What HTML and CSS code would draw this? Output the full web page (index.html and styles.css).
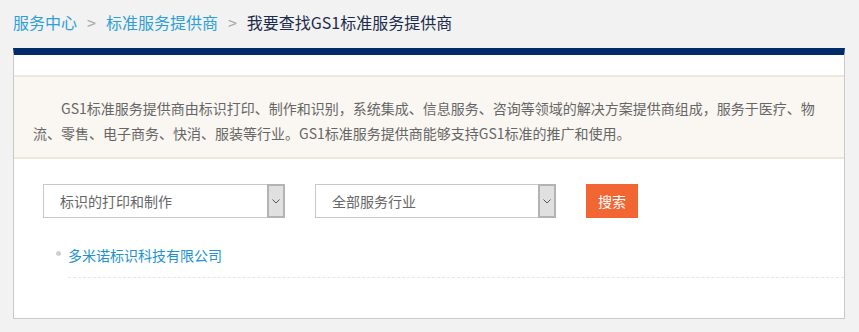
FILE: index.html
```html
<!DOCTYPE html>
<html lang="zh-CN">
<head>
<meta charset="utf-8">
<title>我要查找GS1标准服务提供商</title>
<link rel="stylesheet" href="styles.css">
</head>
<body>
<nav class="crumbs">
  <a class="crumb-link" href="#">服务中心</a><span class="sep">&gt;</span><a class="crumb-link" href="#">标准服务提供商</a><span class="sep">&gt;</span><span class="crumb-current">我要查找GS1标准服务提供商</span>
</nav>
<main class="box">
  <div class="intro">
    <p class="intro-text">GS1标准服务提供商由标识打印、制作和识别，系统集成、信息服务、咨询等领域的解决方案提供商组成，服务于医疗、物流、零售、电子商务、快消、服装等行业。GS1标准服务提供商能够支持GS1标准的推广和使用。</p>
  </div>
  <form class="filters">
    <div class="select select-wide">
      <span class="select-value">标识的打印和制作</span>
      <span class="select-arrow"><svg width="8" height="5" viewBox="0 0 8 5"><path d="M0.5 0.5 L4 4 L7.5 0.5" fill="none" stroke="#555" stroke-width="1"/></svg></span>
    </div>
    <div class="select select-narrow">
      <span class="select-value">全部服务行业</span>
      <span class="select-arrow"><svg width="8" height="5" viewBox="0 0 8 5"><path d="M0.5 0.5 L4 4 L7.5 0.5" fill="none" stroke="#555" stroke-width="1"/></svg></span>
    </div>
    <button class="search-btn" type="button">搜索</button>
  </form>
  <ul class="results">
    <li class="result"><span class="dot"></span><a class="result-name" href="#">多米诺标识科技有限公司</a></li>
  </ul>
</main>
</body>
</html>
```
FILE: styles.css
```css
* { box-sizing: border-box; }
body {
  margin: 0;
  background: #f2f2f2;
  font-family: "Microsoft YaHei", "Noto Sans CJK SC", "Noto Sans", sans-serif;
  color: #666;
}
a { text-decoration: none; }

.crumbs {
  height: 48px;
  padding: 12px 13px 0;
  font-size: 16px;
  line-height: 20px;
  white-space: nowrap;
}
.crumb-link { color: #2e9fd6; }
.sep { color: #aaa; margin: 0 10px; }
.crumb-current { color: #1d2b4a; }

.box {
  margin: 0 14px 0 13px;
  background: #fff;
  border: 1px solid #c9c9c9;
  border-top: 7px solid #022b69;
  padding-top: 20px;
}

.intro {
  background: #faf7f2;
  border-top: 2px solid #efe7da;
  border-bottom: 2px solid #efe7da;
  padding: 19px 18px 11px 19px;
}
.intro-text {
  margin: 0;
  font-size: 14px;
  line-height: 25px;
  text-indent: 28px;
  color: #666;
}

.filters {
  display: flex;
  align-items: center;
  gap: 30px;
  padding: 25px 0 0 29px;
  margin: 0;
}
.select {
  display: flex;
  height: 34px;
  border: 1px solid #c8c8c8;
  background: #fff;
}
.select-wide { width: 242px; }
.select-narrow { width: 241px; }
.select-value {
  flex: 1;
  padding-left: 16px;
  font-size: 14px;
  line-height: 32px;
  color: #666;
}
.select-arrow {
  width: 18px;
  margin: -1px -1px -1px 0;
  background: #e0e0e0;
  border: 2px solid #b3b3b3;
  display: flex;
  align-items: center;
  justify-content: center;
}
.search-btn {
  width: 52px;
  height: 34px;
  border: 0;
  padding: 0;
  background: #f26633;
  color: #fff;
  font-family: inherit;
  font-size: 14px;
}

.results {
  list-style: none;
  margin: 27px 0 0;
  padding: 0 0 40px 42px;
}
.result {
  display: flex;
  align-items: flex-start;
  gap: 7px;
}
.dot {
  width: 5px;
  height: 5px;
  border-radius: 50%;
  background: #cfcfcf;
  margin-top: 6px;
  flex: none;
}
.result-name {
  flex: 1;
  font-size: 14px;
  line-height: 20px;
  padding-bottom: 12px;
  color: #2391cf;
  border-bottom: 1px dashed #e6e6e6;
}
```
